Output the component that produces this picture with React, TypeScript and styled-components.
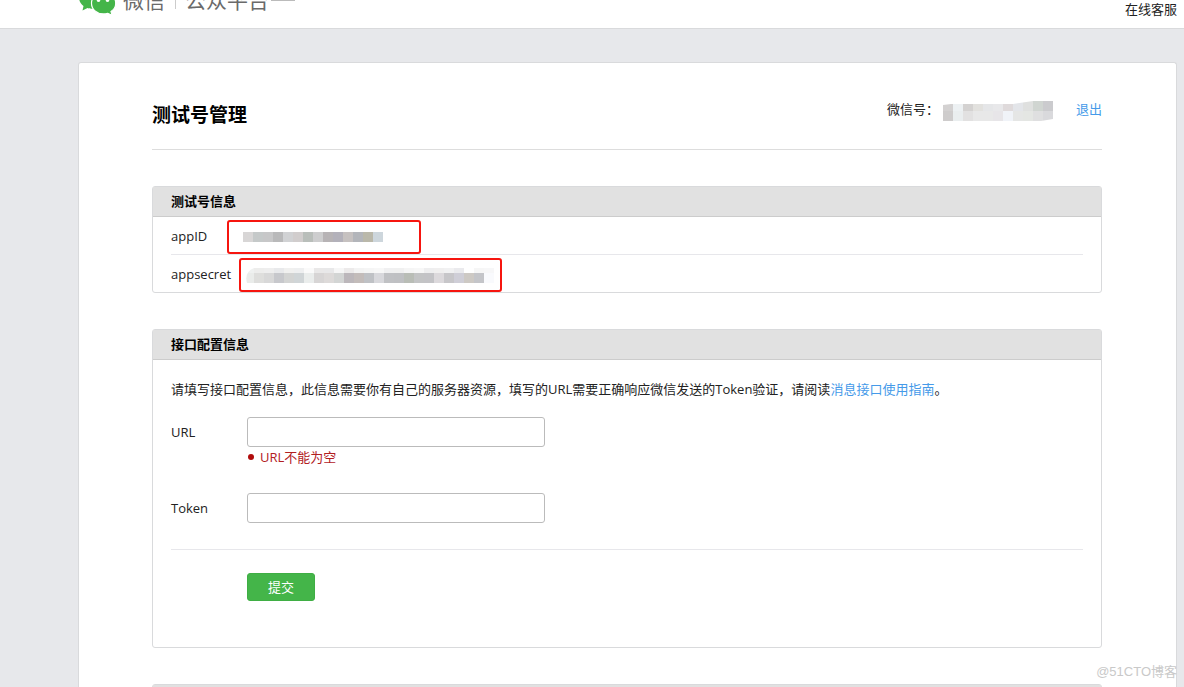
import React from "react";
import styled, { createGlobalStyle } from "styled-components";

const Global = createGlobalStyle`
  * { box-sizing: border-box; }
  body {
    margin: 0;
    background: #e7e8eb;
    color: #222;
    font: 13px/20px "Open Sans", "Noto Sans CJK SC", sans-serif;
  }
`;

const Page = styled.div`
  position: relative;
  height: 100vh;
  display: flex;
  flex-direction: column;
  overflow: hidden;
`;

const Header = styled.header`
  flex: none;
  height: 29px;
  display: flex;
  justify-content: space-between;
  align-items: flex-end;
  padding: 0 7px 0 78px;
  background: #fff;
  border-bottom: 1px solid #d9dadc;
  overflow: hidden;
`;

const Brand = styled.div`
  display: flex;
  align-items: flex-end;
  padding-bottom: 13px;
  color: #6a6a6a;
  font-size: 21px;
  line-height: 30px;
`;

const Logo = styled.svg`
  width: 38px;
  height: 32px;
  margin-right: 7px;
`;

const Divider = styled.span`
  width: 1px;
  height: 24px;
  margin: 0 9px 6px 10px;
  background: #ccc;
`;

const BrandBadge = styled.span`
  width: 24px;
  height: 20px;
  margin: 0 0 14px 2px;
  border-bottom: 1px solid #bbb;
`;

const Service = styled.a`
  padding-bottom: 9px;
  color: #222;
  text-decoration: none;
`;

const Sheet = styled.main`
  flex: 1 0 auto;
  margin: 33px 7px 0 78px;
  padding: 32px 74px 0 73px;
  background: #fff;
  border: 1px solid #d9dadc;
  border-bottom: 0;
  border-radius: 3px 3px 0 0;
`;

const TitleBar = styled.div`
  display: flex;
  justify-content: space-between;
  align-items: flex-start;
  height: 55px;
  border-bottom: 1px solid #ddd;
`;

const Title = styled.h1`
  margin: 6px 0 0;
  color: #000;
  font-size: 19px;
  line-height: 28px;
`;

const Account = styled.div`
  display: flex;
  align-items: flex-start;
  gap: 4px;
  padding-top: 4px;
`;

const Link = styled.a`
  color: #459ae9;
  text-decoration: none;
`;

const Logout = styled(Link)`
  margin-left: 19px;
`;

const Mosaic = styled.svg`
  flex: none;
  display: block;
`;

const Panel = styled.section`
  margin-top: 36px;
  border: 1px solid #d9dadc;
  border-radius: 3px;
`;

const PanelTitle = styled.h2`
  min-height: 30px;
  margin: 0;
  padding: 4px 18px 5px;
  background: #e1e1e1;
  border-bottom: 1px solid #ccc;
  color: #000;
  font-size: 13px;
  line-height: 20px;
`;

const InfoList = styled.dl`
  margin: 0;
  padding: 0 18px;
`;

const InfoRow = styled.div<{ $gap: number }>`
  display: flex;
  align-items: center;
  gap: ${(p) => p.$gap}px;
  height: 37px;

  & + & {
    border-top: 1px solid #e7e7eb;
    height: 38px;
  }
`;

const InfoValue = styled.dd<{ $width: number; $inset: number }>`
  display: flex;
  align-items: center;
  align-self: flex-end;
  width: ${(p) => p.$width}px;
  height: 34px;
  margin: 0;
  padding-left: ${(p) => p.$inset}px;
  border: 2px solid #f6150f;
  border-radius: 3px;
`;

const Form = styled.form`
  padding: 19px 18px 46px;
`;

const Intro = styled.p`
  margin: 0 0 18px;
`;

const Field = styled.div`
  display: flex;
  margin-bottom: 26px;
`;

const FieldLabel = styled.label`
  width: 76px;
  line-height: 30px;
`;

const TextInput = styled.input`
  display: block;
  width: 298px;
  height: 30px;
  padding: 0 8px;
  background: #fff;
  border: 1px solid #bbb;
  border-radius: 3px;
  font: inherit;
  outline: none;
`;

const ErrorText = styled.div`
  display: flex;
  align-items: center;
  gap: 6px;
  padding-left: 1px;
  color: #b2201f;

  &::before {
    content: "";
    width: 6px;
    height: 6px;
    border-radius: 50%;
    background: #b00c0c;
  }
`;

const Actions = styled.div`
  padding: 23px 0 0 76px;
  border-top: 1px solid #e7e7eb;
`;

const Submit = styled.button`
  display: block;
  width: 68px;
  height: 28px;
  padding: 0;
  background: #44b549;
  border: 1px solid #3fae44;
  border-radius: 3px;
  color: #fff;
  font: inherit;
`;

const Watermark = styled.span`
  position: absolute;
  right: 7px;
  bottom: 5px;
  color: #c9c9c9;
  font: 13px/20px "Liberation Sans", "Noto Sans CJK SC", sans-serif;
`;

const accountTop = ["#d3d1d1", "#edf1f3", "#d4d2d1", "#e2e1de", "#e5e6e8", "#e8e8ea", "#dfdadb", "#e3e5e9", "#dfe0df", "#d0d5d1", "#cbcbce", "#d9d8dc"];
const accountBottom = ["#cecccc", "#eaeeef", "#e2e1e1", "#e8e8e8", "#e8e8e8", "#e7e5e8", "#f0f3f8", "#e5e6e5", "#e4e6e3", "#dfdfe0", "#d9d9dc"];
const idCells = ["#d8d6d6", "#c5c9c9", "#c7c7c8", "#b9b9ba", "#d1d2d4", "#d1cdcd", "#b9beba", "#cdcdce", "#b7b3b5", "#b3b1ba", "#c6c1c0", "#b3b5ba", "#bab8aa", "#cdd6dc"];
const secretTop = ["#eff1f0", "#ededec", "#eeeeee", "#e8e9eb", "#f0f0ef", "#eeeff0", "#fafafa", "#e9e8e8", "#e8e8e9", "#f6f6f6", "#eceaea", "#f3f3f3", "#f5f5f5", "#f7f7f7", "#f0f0f1", "#f0f0f0", "#f5f5f5", "#f7f7f7", "#eeeeef", "#f0efef", "#f1f1f2", "#eaeaed", "#ffffff", "#f6f6f6", "#f7f7f8"];
const secretMain = ["#eaecea", "#dededc", "#d8d8d8", "#c7c8cc", "#d3d4d3", "#d0d5d7", "#eaedec", "#d7d5d5", "#dddad9", "#d3d5d4", "#bcb7bb", "#c3bcba", "#bfc1c5", "#d8d8dc", "#c0c1c4", "#bfc0c3", "#b9bdb6", "#c3c4c5", "#c3c3c6", "#dcd9dc", "#c7c6c9", "#cfced7", "#cdc9c4", "#c4c5c9", "#f9fafd"];

type CellsProps = { colors: string[]; x?: number; y?: number; height?: number };

const Cells = ({ colors, x = 0, y = 0, height = 10 }: CellsProps) => (
  <g shapeRendering="crispEdges">
    {colors.map((color, i) => (
      <rect key={i} x={x + i * 10} y={y} width={10} height={height} fill={color} />
    ))}
  </g>
);

export default function App() {
  return (
    <Page>
      <Global />
      <Header>
        <Brand>
          <Logo viewBox="0 0 38 32" aria-hidden="true">
            <g fill="#44b549">
              <path d="M15 1C7 1 1 7 1 14c0 4 1.500 6.700 4.500 9L4.500 27.500l5-2.500c2 .6 4 .8 5.500.8 8 0 14-5 14-12S23 1 15 1z" />
              <path stroke="#fff" strokeWidth="1.200" d="M25.500 9.500c-6.700 0-12 4.600-12 10.700s5.300 10.700 12 10.700c1.500 0 2.900-.2 4.200-.6l4.500 2-1.200-3.700c2.900-1.900 4.700-4.800 4.700-8.400 0-6.100-5.500-10.700-12.200-10.700z" />
            </g>
            <circle cx="20.500" cy="17" r="1.900" fill="#fff" />
            <circle cx="29.500" cy="17" r="1.900" fill="#fff" />
          </Logo>
          <span>微信</span>
          <Divider />
          <span>公众平台</span>
          <BrandBadge />
        </Brand>
        <Service href="#service">在线客服</Service>
      </Header>

      <Sheet>
        <TitleBar>
          <Title>测试号管理</Title>
          <Account>
            <span>微信号：</span>
            <Mosaic width="110" height="24" aria-hidden="true">
              <clipPath id="account-shape">
                <path d="M0 6L8 5H70L90 2H110V20L98 22H0z" />
              </clipPath>
              <g clipPath="url(#account-shape)">
                <Cells colors={accountTop} height={12} />
                <Cells colors={accountBottom} y={12} height={10} />
              </g>
            </Mosaic>
            <Logout href="#logout">退出</Logout>
          </Account>
        </TitleBar>

        <Panel>
          <PanelTitle>测试号信息</PanelTitle>
          <InfoList>
            <InfoRow $gap={20}>
              <dt>appID</dt>
              <InfoValue $width={194} $inset={14}>
                <Mosaic width="140" height="10" aria-hidden="true">
                  <Cells colors={idCells} />
                </Mosaic>
              </InfoValue>
            </InfoRow>
            <InfoRow $gap={8}>
              <dt>appsecret</dt>
              <InfoValue $width={263} $inset={5}>
                <Mosaic width="248" height="15" aria-hidden="true">
                  <clipPath id="secret-shape">
                    <path d="M8 0H248V15H1Q-2 4 8 0z" />
                  </clipPath>
                  <g clipPath="url(#secret-shape)">
                    <Cells colors={secretTop} x={-2} height={5} />
                    <Cells colors={secretMain} x={-2} y={5} />
                  </g>
                </Mosaic>
              </InfoValue>
            </InfoRow>
          </InfoList>
        </Panel>

        <Panel>
          <PanelTitle>接口配置信息</PanelTitle>
          <Form noValidate onSubmit={(e) => e.preventDefault()}>
            <Intro>
              请填写接口配置信息，此信息需要你有自己的服务器资源，填写的URL需要正确响应微信发送的Token验证，请阅读<Link href="#guide">消息接口使用指南</Link>。
            </Intro>
            <Field>
              <FieldLabel htmlFor="url">URL</FieldLabel>
              <div>
                <TextInput id="url" type="text" aria-describedby="url-error" />
                <ErrorText id="url-error">URL不能为空</ErrorText>
              </div>
            </Field>
            <Field>
              <FieldLabel htmlFor="token">Token</FieldLabel>
              <TextInput id="token" type="text" />
            </Field>
            <Actions>
              <Submit type="submit">提交</Submit>
            </Actions>
          </Form>
        </Panel>

        <Panel>
          <PanelTitle />
        </Panel>
      </Sheet>
      <Watermark>@51CTO博客</Watermark>
    </Page>
  );
}
